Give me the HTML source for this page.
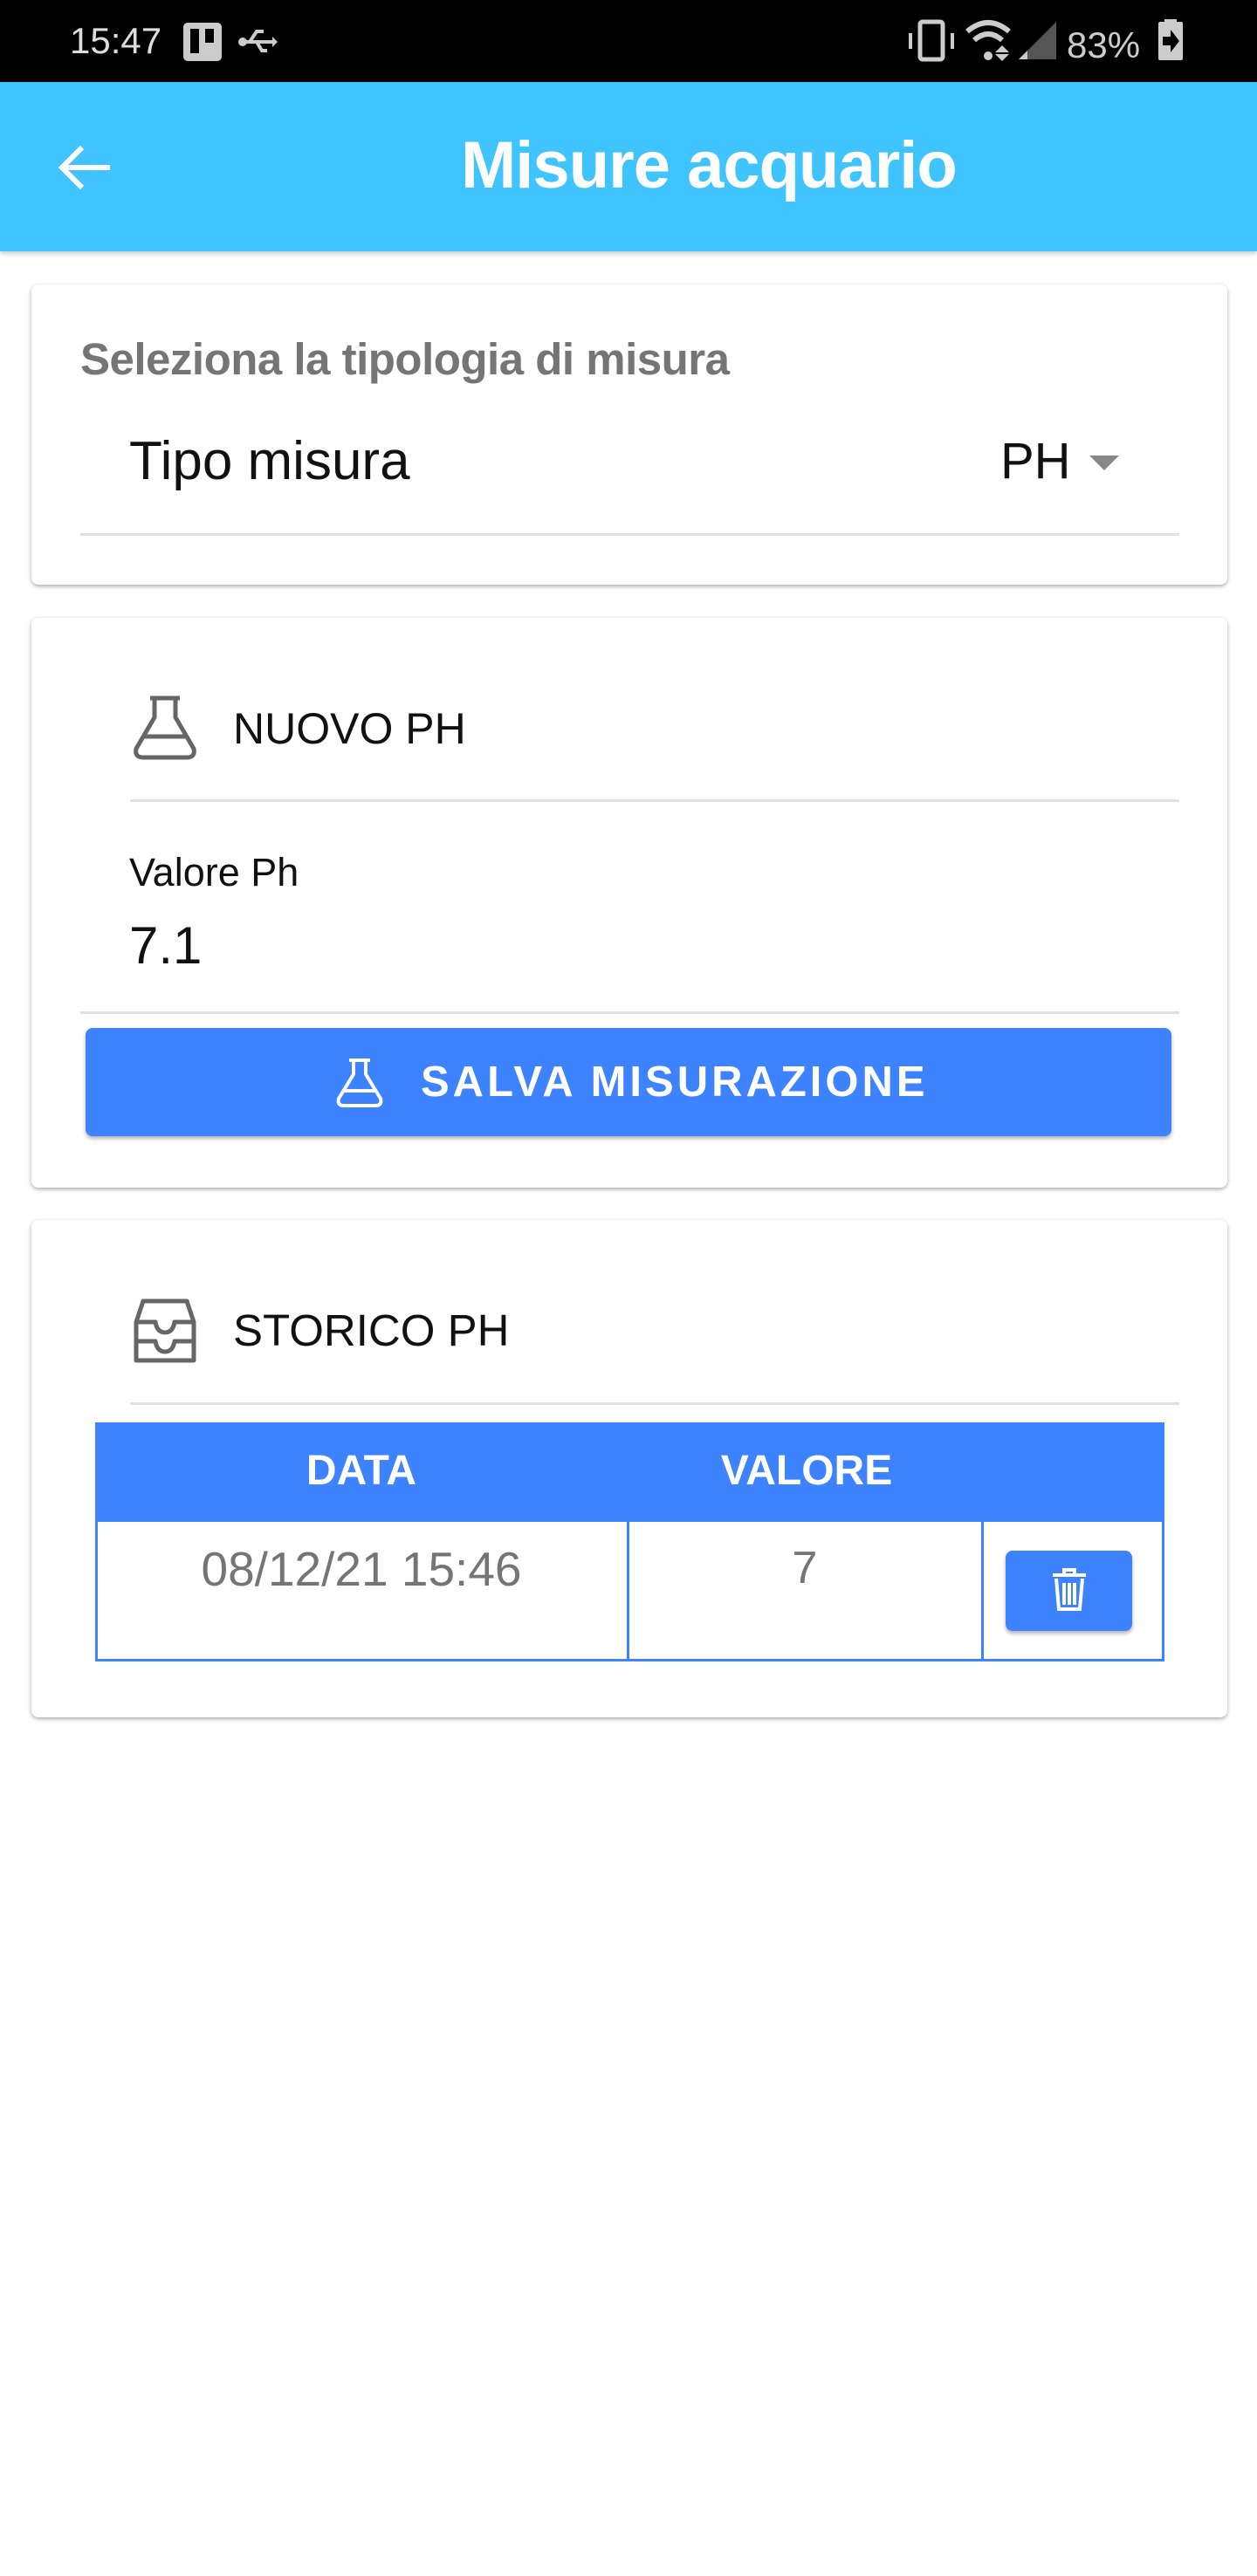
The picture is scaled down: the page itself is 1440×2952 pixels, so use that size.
<!DOCTYPE html>
<html><head><meta charset="utf-8"><style>
*{margin:0;padding:0;box-sizing:border-box}
body{width:1440px;height:2952px;background:#fff;font-family:"Liberation Sans",Roboto,sans-serif;position:relative;overflow:hidden}
.a{position:absolute}
.card{position:absolute;left:36px;width:1370px;background:#fff;border-radius:8px;box-shadow:0 2px 4px rgba(0,0,0,.28),0 1px 8px rgba(0,0,0,.08)}
.line{position:absolute;height:3px;background:#e0e0e0}
.t{position:absolute;white-space:nowrap;line-height:1}
</style></head><body>
<div class="a" style="left:0;top:0;width:1440px;height:94px;background:#000"></div>
<div class="t" style="left:80px;top:26px;font-size:42px;color:#ddd">15:47</div>
<div class="a" style="left:210px;top:26px;width:44px;height:44px;background:#ccc;border-radius:5px"><div class="a" style="left:8px;top:7px;width:10px;height:28px;background:#000"></div><div class="a" style="left:25px;top:7px;width:10px;height:16px;background:#000"></div></div>
<svg class="a" style="left:272px;top:28px" width="46" height="40" viewBox="0 0 46 40"><g fill="none" stroke="#ccc" stroke-width="4"><path d="M4 20 H42 M14 20 L22 8 H30 M22 20 L28 30 H34"/></g><circle cx="6" cy="20" r="5" fill="#ccc"/><path d="M40 14 l6 6 l-6 6z" fill="#ccc"/></svg>
<svg class="a" style="left:1030px;top:0" width="410" height="94" viewBox="0 0 410 94">
<g fill="#ccc"><rect x="24" y="25" width="26" height="43" rx="3" fill="none" stroke="#ccc" stroke-width="5"/><rect x="11" y="38" width="4" height="18"/><rect x="59" y="38" width="4" height="18"/>
<path d="M78 36 Q102 16 126 36" fill="none" stroke="#ccc" stroke-width="6"/><path d="M86 46 Q102 32 118 46" fill="none" stroke="#ccc" stroke-width="6"/><circle cx="102" cy="64" r="5"/><path d="M110 60 l8-8 l8 8z M110 62 l8 8 l8-8z"/>
<path d="M137 68 l43 -43 v43z" fill="#555"/><path d="M137 68 l10 -10 v10z"/>
<text x="192" y="66" font-size="42" font-family="Liberation Sans">83%</text>
<rect x="297" y="25" width="28" height="44" rx="2"/><rect x="304" y="22" width="14" height="5"/><path d="M302 42 h9 v-8 l10 13 l-10 13 v-8 h-9z" fill="#000"/></g></svg>
<div class="a" style="left:0;top:94px;width:1440px;height:194px;background:#40c4ff;box-shadow:0 3px 5px rgba(0,0,0,.2)"></div>
<svg class="a" style="left:64px;top:164px" width="68" height="56" viewBox="0 0 68 56"><path d="M62 28 H8 M30 5 L7 28 L30 51" fill="none" stroke="#fff" stroke-width="6"/></svg>
<div class="t" style="left:528px;top:152px;font-size:76px;color:#fff;font-weight:bold;letter-spacing:-1px">Misure acquario</div>

<div class="card" style="top:326px;height:344px"></div>
<div class="t" style="left:92px;top:386px;font-size:51px;color:#757575;font-weight:bold;letter-spacing:-0.5px">Seleziona la tipologia di misura</div>
<div class="t" style="left:148px;top:498px;font-size:62px;color:#111">Tipo misura</div>
<div class="t" style="left:1146px;top:500px;font-size:58px;color:#111">PH</div>
<svg class="a" style="left:1248px;top:522px" width="34" height="18"><path d="M0 0h34L17 17z" fill="#888"/></svg>
<div class="line" style="left:92px;top:611px;width:1259px"></div>

<div class="card" style="top:708px;height:653px"></div>
<svg class="a" style="left:150px;top:796px" width="78" height="76" viewBox="0 0 78 76"><path d="M22 4h34 M27 4v22 L6 62 Q4 72 14 72 H64 Q74 72 72 62 L51 26 V4 M16 48 H62" fill="none" stroke="#666" stroke-width="5" stroke-linejoin="round"/></svg>
<div class="t" style="left:267px;top:810px;font-size:50px;color:#111">NUOVO PH</div>
<div class="line" style="left:149px;top:916px;width:1202px"></div>
<div class="t" style="left:148px;top:977px;font-size:45px;color:#111">Valore Ph</div>
<div class="t" style="left:148px;top:1054px;font-size:60px;color:#111">7.1</div>
<div class="line" style="left:92px;top:1159px;width:1259px"></div>
<div class="a" style="left:98px;top:1178px;width:1244px;height:124px;background:#3d82fe;border-radius:8px;box-shadow:0 3px 4px rgba(0,0,0,.3)"></div>
<svg class="a" style="left:384px;top:1212px" width="56" height="58" viewBox="0 0 56 58"><path d="M16 3h24 M21 3v16 L4 47 Q2 55 10 55 H46 Q54 55 52 47 L35 19 V3 M11 38 H45" fill="none" stroke="#fff" stroke-width="4" stroke-linejoin="round"/></svg>
<div class="t" style="left:482px;top:1216px;font-size:49px;color:#fff;font-weight:bold;letter-spacing:4px">SALVA MISURAZIONE</div>

<div class="card" style="top:1398px;height:570px"></div>
<svg class="a" style="left:150px;top:1487px" width="78" height="78" viewBox="0 0 78 78"><path d="M14 4 H64 L72 28 V72 H6 V28z M6 28 H28 Q30 40 39 40 Q48 40 50 28 H72 M6 50 H28 Q30 62 39 62 Q48 62 50 50 H72" fill="none" stroke="#666" stroke-width="5" stroke-linejoin="round"/></svg>
<div class="t" style="left:267px;top:1499px;font-size:51px;color:#111">STORICO PH</div>
<div class="line" style="left:149px;top:1607px;width:1202px"></div>
<div class="a" style="left:109px;top:1630px;width:1225px;height:274px;border:3px solid #3d82fe"></div>
<div class="a" style="left:109px;top:1630px;width:1225px;height:114px;background:#3d82fe"></div>
<div class="t" style="left:109px;width:610px;text-align:center;top:1662px;font-size:48px;color:#fff;font-weight:bold">DATA</div>
<div class="t" style="left:719px;width:410px;text-align:center;top:1662px;font-size:48px;color:#fff;font-weight:bold">VALORE</div>
<div class="a" style="left:718px;top:1744px;width:3px;height:160px;background:#3d82fe"></div>
<div class="a" style="left:1124px;top:1744px;width:3px;height:160px;background:#3d82fe"></div>
<div class="t" style="left:109px;width:610px;text-align:center;top:1771px;font-size:55px;color:#757575">08/12/21 15:46</div>
<div class="t" style="left:719px;width:406px;text-align:center;top:1771px;font-size:52px;color:#757575">7</div>
<div class="a" style="left:1152px;top:1777px;width:145px;height:92px;background:#3d82fe;border-radius:8px;box-shadow:0 3px 4px rgba(0,0,0,.3)"></div>
<svg class="a" style="left:1204px;top:1796px" width="42" height="52" viewBox="0 0 42 52"><path d="M2 9h38 M15 9V3h12v6 M6 13 L9 48 H33 L36 13 M15 18v25 M21 18v25 M27 18v25" fill="none" stroke="#fff" stroke-width="4"/></svg>
</body></html>
